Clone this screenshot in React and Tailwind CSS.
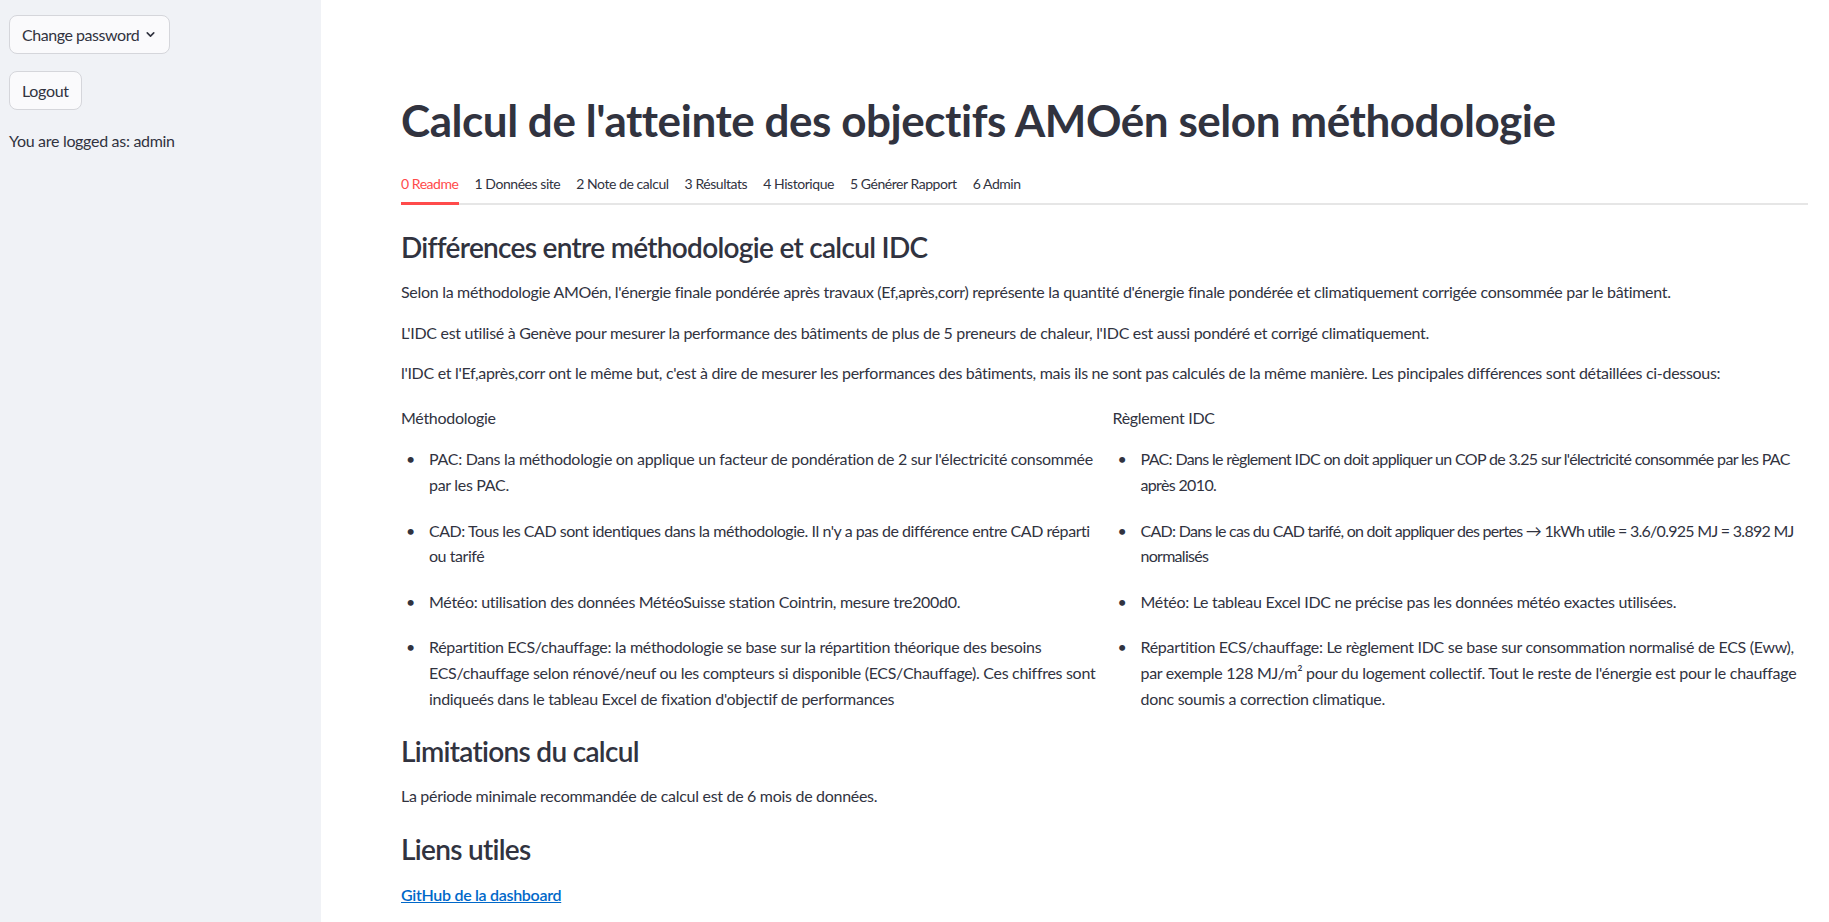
import React from "react";

const font = { fontFamily: "Lato, 'Noto Sans', sans-serif" };

function ChevronDown() {
  return (
    <svg width="13" height="13" viewBox="0 0 24 24" fill="none" stroke="#31333f" strokeWidth="3" strokeLinecap="round" strokeLinejoin="round">
      <path d="M6 9l6 6 6-6" />
    </svg>
  );
}

const tabs = ["0 Readme", "1 Données site", "2 Note de calcul", "3 Résultats", "4 Historique", "5 Générer Rapport", "6 Admin"];

const left = [
  { c: "tracking-[-0.3px]", t: "PAC: Dans la méthodologie on applique un facteur de pondération de 2 sur l'électricité consommée par les PAC." },
  { c: "tracking-[-0.45px]", t: "CAD: Tous les CAD sont identiques dans la méthodologie. Il n'y a pas de différence entre CAD réparti ou tarifé" },
  { c: "tracking-[-0.3px]", t: "Météo: utilisation des données MétéoSuisse station Cointrin, mesure tre200d0." },
  { c: "tracking-[-0.3px]", t: "Répartition ECS/chauffage: la méthodologie se base sur la répartition théorique des besoins ECS/chauffage selon rénové/neuf ou les compteurs si disponible (ECS/Chauffage). Ces chiffres sont indiqueés dans le tableau Excel de fixation d'objectif de performances" },
];

const right = [
  { c: "tracking-[-0.65px]", t: "PAC: Dans le règlement IDC on doit appliquer un COP de 3.25 sur l'électricité consommée par les PAC après 2010." },
  { c: "tracking-[-0.72px]", t: "CAD: Dans le cas du CAD tarifé, on doit appliquer des pertes → 1kWh utile = 3.6/0.925 MJ = 3.892 MJ normalisés" },
  { c: "tracking-[-0.3px]", t: "Météo: Le tableau Excel IDC ne précise pas les données météo exactes utilisées." },
  { c: "tracking-[-0.3px]", t: "Répartition ECS/chauffage: Le règlement IDC se base sur consommation normalisé de ECS (Eww), par exemple 128 MJ/m² pour du logement collectif. Tout le reste de l'énergie est pour le chauffage donc soumis a correction climatique." },
];

function Column({ title, items }) {
  return (
    <div className="flex-1 min-w-0">
      <p className="leading-[25.6px] mb-[16px]">{title}</p>
      <ul className="flex flex-col gap-[20px]">
        {items.map((it, i) => (
          <li key={i} className="flex leading-[25.6px]">
            <span className="w-[28px] shrink-0 pl-[5px]">•</span>
            <span className={"min-w-0 " + it.c}>{it.t}</span>
          </li>
        ))}
      </ul>
    </div>
  );
}

export default function App() {
  return (
    <div className="flex h-[922px] w-full overflow-hidden bg-white text-[#31333f] text-[16px] tracking-[-0.3px]" style={font}>
      <aside className="w-[321px] shrink-0 bg-[#f0f2f6] pl-[9px] pt-[15px] flex flex-col items-start">
        <button className="h-[39px] px-[12px] rounded-[8px] border border-[#d5d6db] bg-[#fafafc] flex items-center gap-[5px] text-[16px] tracking-[-0.45px]">
          <span>Change password</span>
          <ChevronDown />
        </button>
        <button className="mt-[17px] h-[39px] px-[12px] rounded-[8px] border border-[#d5d6db] bg-[#fafafc] flex items-center text-[16px]">
          Logout
        </button>
        <p className="mt-[18px] leading-[25.6px]">You are logged as: admin</p>
      </aside>
      <main className="flex-1 min-w-0 pl-[80px] pr-[21px] pt-[94px]">
        <h1 className="text-[44px] font-bold leading-[52px] tracking-[-0.45px]">Calcul de l'atteinte des objectifs AMOén selon méthodologie</h1>
        <div className="mt-[16px] flex gap-[16px] border-b-2 border-[#e6e6e6]">
          {tabs.map((t, i) => (
            <div key={t} className={"text-[14px] tracking-[-0.45px] pt-[11px] pb-[8px] -mb-[2px] border-b-[3px] " + (i === 0 ? "border-[#ff4b4b] text-[#ff4b4b]" : "border-transparent")}>
              {t}
            </div>
          ))}
        </div>
        <h3 className="mt-[24px] text-[28px] font-semibold leading-[36px] tracking-[-0.7px]">Différences entre méthodologie et calcul IDC</h3>
        <div className="mt-[14px] flex flex-col gap-[15px] leading-[25.6px]">
          <p>Selon la méthodologie AMOén, l'énergie finale pondérée après travaux (Ef,après,corr) représente la quantité d'énergie finale pondérée et climatiquement corrigée consommée par le bâtiment.</p>
          <p>L'IDC est utilisé à Genève pour mesurer la performance des bâtiments de plus de 5 preneurs de chaleur, l'IDC est aussi pondéré et corrigé climatiquement.</p>
          <p>l'IDC et l'Ef,après,corr ont le même but, c'est à dire de mesurer les performances des bâtiments, mais ils ne sont pas calculés de la même manière. Les pincipales différences sont détaillées ci-dessous:</p>
        </div>
        <div className="mt-[19px] flex gap-[16px]">
          <Column title="Méthodologie" items={left} />
          <Column title="Règlement IDC" items={right} />
        </div>
        <h3 className="mt-[22px] text-[28px] font-semibold leading-[36px] tracking-[-0.7px]">Limitations du calcul</h3>
        <p className="mt-[14px] leading-[25.6px]">La période minimale recommandée de calcul est de 6 mois de données.</p>
        <h3 className="mt-[22px] text-[28px] font-semibold leading-[36px] tracking-[-0.7px]">Liens utiles</h3>
        <p className="mt-[15px] leading-[25.6px]">
          <a href="#" className="font-semibold text-[#0068c9] underline">GitHub de la dashboard</a>
        </p>
      </main>
    </div>
  );
}
